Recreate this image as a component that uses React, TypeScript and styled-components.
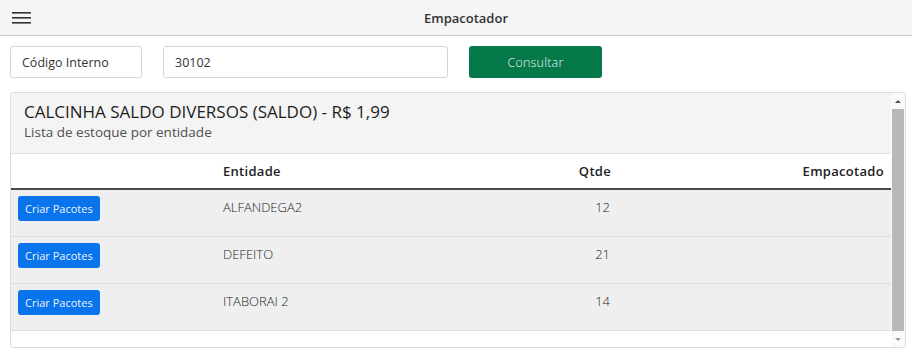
import React from 'react';
import styled, { createGlobalStyle } from 'styled-components';

const GlobalStyle = createGlobalStyle`
  html, body {
    margin: 0;
    padding: 0;
    background: #fff;
    font-family: 'Open Sans', 'Noto Sans', sans-serif;
    color: #222;
  }
  * { box-sizing: border-box; }
`;

const Page = styled.div`
  width: 921px;
  height: 352px;
  overflow: hidden;
`;

const TopBar = styled.header`
  width: 912px;
  height: 36px;
  background: #f5f5f5;
  border-bottom: 1px solid #c4c4c4;
  display: flex;
  align-items: center;
`;

const MenuButton = styled.button`
  border: none;
  background: none;
  padding: 0 0 0 12px;
  width: 40px;
  height: 100%;
  display: flex;
  align-items: center;
  cursor: pointer;
`;

const BarTitle = styled.h1`
  flex: 1;
  margin: 0 20px 0 0;
  text-align: center;
  font-size: 13px;
  font-weight: 600;
  color: #333;
`;

const Form = styled.div`
  display: flex;
  align-items: center;
  padding: 10px 10px 0 10px;
  gap: 21px;
`;

const Field = styled.input<{ $width: number }>`
  width: ${({ $width }) => $width}px;
  height: 32px;
  border: 1px solid #d6d6d6;
  border-radius: 3px;
  padding: 0 11px;
  font-family: 'Open Sans', sans-serif;
  font-size: 12.5px;
  color: #333;
  outline: none;
`;

const ConsultButton = styled.button`
  width: 133px;
  height: 32px;
  background: #06794b;
  border: none;
  border-radius: 3px;
  color: #e9f3ee;
  font-family: 'Open Sans', sans-serif;
  font-weight: 300;
  font-size: 12.5px;
  letter-spacing: 0.2px;
`;

const Card = styled.section`
  margin: 14px 0 0 10px;
  width: 896px;
  height: 256px;
  border: 1px solid #dcdcdc;
  border-radius: 3px;
  display: flex;
  overflow: hidden;
`;

const CardBody = styled.div`
  flex: 1;
  display: flex;
  flex-direction: column;
`;

const CardHeader = styled.div`
  background: #f4f4f4;
  padding: 7px 13px 0;
  height: 61px;
  border-bottom: 1px solid #e2e2e2;
`;

const ProductTitle = styled.h2`
  margin: 0;
  font-size: 17px;
  font-weight: 400;
  color: #1d1d1d;
  line-height: 23px;
`;

const Subtitle = styled.p`
  margin: 0;
  font-size: 13.5px;
  color: #505050;
  line-height: 18px;
`;

const Table = styled.table`
  width: 100%;
  border-collapse: collapse;
`;

const HeadCell = styled.th<{ $align?: 'left' | 'right' }>`
  height: 35px;
  padding: 0 ${({ $align }) => ($align === 'right' ? '7px' : '8px')} 0 8px;
  text-align: ${({ $align }) => $align ?? 'left'};
  font-size: 13px;
  font-weight: 600;
  letter-spacing: 0.3px;
  color: #222;
  border-bottom: 2px solid #4a4a4a;
  background: #fff;
`;

const Row = styled.tr`
  background: #efefef;
  border-bottom: 1px solid #dedede;
  height: 47px;
`;

const Cell = styled.td<{ $align?: 'left' | 'right' }>`
  vertical-align: top;
  padding: 8px 8px 0;
  text-align: ${({ $align }) => $align ?? 'left'};
  font-size: 13px;
  font-weight: 300;
  color: #1e1e1e;
`;

const ButtonCell = styled.td`
  vertical-align: top;
  padding: 6px 8px 0 7px;
  width: 204px;
`;

const PackButton = styled.button`
  height: 25px;
  padding: 0 7px;
  background: #0a74ec;
  border: none;
  border-radius: 3px;
  color: #eaf3ff;
  font-family: 'Open Sans', sans-serif;
  font-size: 11px;
`;

const Scrollbar = styled.div`
  width: 14px;
  display: flex;
  flex-direction: column;
  align-items: center;
  background: #fafafa;
  padding: 4px 0 3px;
`;

const Arrow = styled.div<{ $down?: boolean }>`
  width: 0;
  height: 0;
  border-left: 3px solid transparent;
  border-right: 3px solid transparent;
  ${({ $down }) => ($down ? 'border-top: 3px solid #9a9a9a;' : 'border-bottom: 3px solid #505050;')}
  margin: 3px 0;
`;

const Thumb = styled.div`
  width: 12px;
  height: 222px;
  margin: 3px 0 0;
  background: #b8b8b8;
`;

const Spacer = styled.div`
  flex: 1;
`;

const rows = [
  { entity: 'ALFANDEGA2', qty: 12 },
  { entity: 'DEFEITO', qty: 21 },
  { entity: 'ITABORAI 2', qty: 14 },
];

const MenuIcon = () => (
  <svg width="19" height="14" viewBox="0 0 19 14">
    <rect x="0" y="1" width="19" height="1.6" fill="#333" />
    <rect x="0" y="6" width="19" height="1.6" fill="#333" />
    <rect x="0" y="11" width="19" height="1.6" fill="#333" />
  </svg>
);

export default function App() {
  return (
    <Page>
      <GlobalStyle />
      <TopBar>
        <MenuButton aria-label="menu">
          <MenuIcon />
        </MenuButton>
        <BarTitle>Empacotador</BarTitle>
      </TopBar>
      <Form>
        <Field $width={132} defaultValue="Código Interno" readOnly />
        <Field $width={285} defaultValue="30102" />
        <ConsultButton>Consultar</ConsultButton>
      </Form>
      <Card>
        <CardBody>
          <CardHeader>
            <ProductTitle>CALCINHA SALDO DIVERSOS (SALDO) - R$ 1,99</ProductTitle>
            <Subtitle>Lista de estoque por entidade</Subtitle>
          </CardHeader>
          <Table>
            <thead>
              <tr>
                <HeadCell />
                <HeadCell>Entidade</HeadCell>
                <HeadCell $align="right">Qtde</HeadCell>
                <HeadCell $align="right">Empacotado</HeadCell>
              </tr>
            </thead>
            <tbody>
              {rows.map((r) => (
                <Row key={r.entity}>
                  <ButtonCell>
                    <PackButton>Criar Pacotes</PackButton>
                  </ButtonCell>
                  <Cell>{r.entity}</Cell>
                  <Cell $align="right">{r.qty}</Cell>
                  <Cell $align="right" />
                </Row>
              ))}
            </tbody>
          </Table>
        </CardBody>
        <Scrollbar>
          <Arrow />
          <Thumb />
          <Spacer />
          <Arrow $down />
        </Scrollbar>
      </Card>
    </Page>
  );
}
